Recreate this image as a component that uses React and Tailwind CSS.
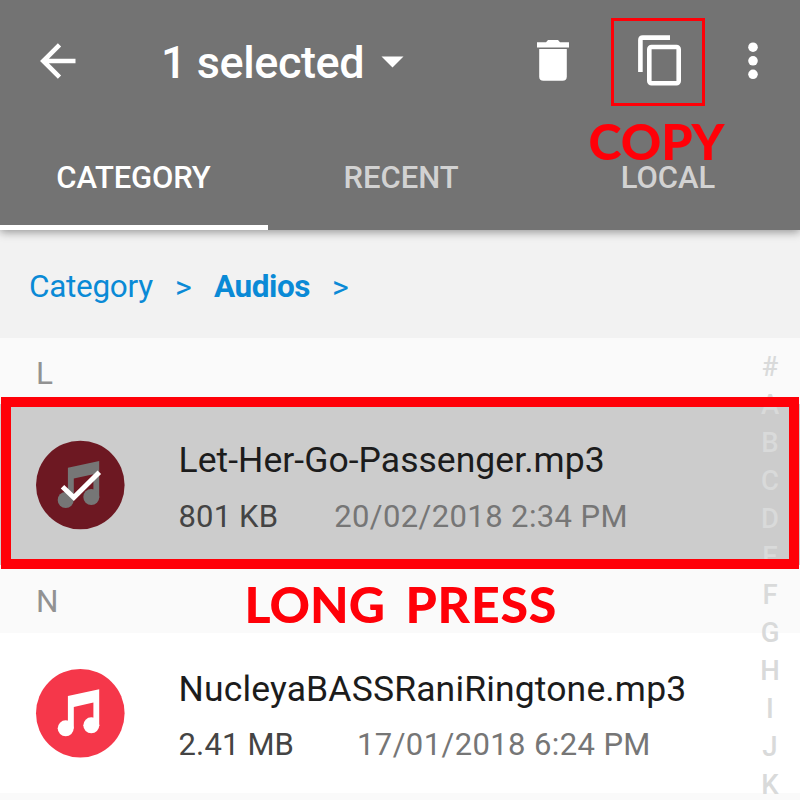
const INDEX = ['#', 'A', 'B', 'C', 'D', 'E', 'F', 'G', 'H', 'I', 'J', 'K'];

function BackIcon() {
  return (
    <svg width="36" height="36" viewBox="0 0 36 36" fill="none" stroke="#fff" strokeWidth="4.6">
      <path d="M35.5 18H3.5M19.5 1.8 3.3 18l16.2 16.2" />
    </svg>
  );
}

function TrashIcon() {
  return (
    <svg width="32" height="41" viewBox="0 0 32 41" fill="#fff">
      <path d="M0 2.2h9L11 0h10l2 2.2h9v5.4H0z" />
      <path d="M2.2 9h27.6v27.5q0 4.3-4.3 4.3h-19q-4.3 0-4.3-4.3z" />
    </svg>
  );
}

function CopyIcon() {
  return (
    <svg width="44" height="51" viewBox="0 0 44 51" fill="none" stroke="#fff" strokeWidth="4.6">
      <path d="M2.4 37V5q0-2.4 2.4-2.4H32" />
      <rect x="11.3" y="12" width="29.4" height="36.2" rx="2.2" />
    </svg>
  );
}

function MoreIcon() {
  return (
    <svg width="10" height="38" viewBox="0 0 10 38" fill="#fff">
      <circle cx="5" cy="5.2" r="4.8" />
      <circle cx="5" cy="18.8" r="4.8" />
      <circle cx="5" cy="32.3" r="4.8" />
    </svg>
  );
}

function AudioIcon({ selected }) {
  const note = selected ? '#767676' : '#fff';
  return (
    <svg width="90" height="90" viewBox={selected ? '-0.3 0 90 90' : '-0.3 0.7 90 90'}>
      <circle cx="45" cy="45" r="44.3" fill={selected ? '#6d1822' : '#f5374a'} />
      <g fill={note}>
        <path d="M32.6 27.8 63.9 21v37h-5.8V34.3L38.5 38.6V60h-5.9z" />
        <circle cx="30.4" cy="60" r="8" />
        <circle cx="56" cy="57" r="8" />
      </g>
      {selected && <path d="M27.2 46.8 38.5 57.6 64 32.2" fill="none" stroke="#fff" strokeWidth="5" />}
    </svg>
  );
}

function Section({ letter, className }) {
  return <div className={`flex items-center bg-[#fafafa] pl-[36px] text-[31.5px] text-[#929292] ${className}`}>{letter}</div>;
}

function FileRow({ name, size, date, gap, nameClass, selected, className }) {
  return (
    <div className={`flex pl-[35px] ${className}`}>
      <div className="w-[143.5px] shrink-0 pt-[36px]">
        <AudioIcon selected={selected} />
      </div>
      <div className="pt-[35px] whitespace-nowrap">
        <div className={`h-[42px] text-[35.5px] leading-[42px] text-[#1c1c1c] ${nameClass}`}>{name}</div>
        <div className={`flex h-[42px] text-[31px] leading-[42px] ${gap}`}>
          <span className="tracking-[0.15px] text-[#444]">{size}</span>
          <span className="tracking-[0.39px] text-[#767676]">{date}</span>
        </div>
      </div>
    </div>
  );
}

export default function App() {
  return (
    <div className="relative h-[800px] w-[800px] overflow-hidden bg-[#fafafa] font-['Roboto',sans-serif]">
      <header className="relative h-[230px] bg-[#737373] text-white shadow-[0_2px_9px_rgba(0,0,0,0.4)]">
        <div className="flex h-[121px] items-center pl-[40px]">
          <div className="w-[121px]"><BackIcon /></div>
          <div className="w-[220px] pt-[5px] text-[45px] font-medium tracking-[-0.45px] whitespace-nowrap">1 selected</div>
          <svg className="mt-[2px]" width="23" height="12" viewBox="0 0 23 12" fill="#fff"><path d="M0.5 0.5h22l-11 11z" /></svg>
          <div className="ml-[133px] w-[100.5px]"><TrashIcon /></div>
          <div className="w-[110.5px]"><CopyIcon /></div>
          <MoreIcon />
        </div>
        <nav className="grid h-[109px] grid-cols-[268px_266px_266px] text-[31px] font-medium">
          <div className="flex items-center justify-center border-b-[5px] border-white pt-[11px] pr-px tracking-[-0.15px]">CATEGORY</div>
          <div className="flex items-center justify-center pt-[6px] text-[#d2d2d2]">RECENT</div>
          <div className="flex items-center justify-center pt-[6px] pl-[2px] text-[#d2d2d2]">LOCAL</div>
        </nav>
      </header>

      <div className="flex h-[108px] items-center bg-[#f2f2f2] pt-[5px] pl-[29px] text-[31.5px] text-[#0a8ad6]">
        <span className="w-[146px] tracking-[-0.3px]">Category</span>
        <span className="w-[39px] text-[32px]">&gt;</span>
        <span className="w-[118px] font-bold tracking-[-0.45px]">Audios</span>
        <span className="text-[32px]">&gt;</span>
      </div>

      <Section letter="L" className="h-[66px] pt-[5px]" />
      <FileRow selected name="Let-Her-Go-Passenger.mp3" size="801 KB" date="20/02/2018 2:34 PM" gap="mt-[15px] gap-[56px]" nameClass="tracking-[0.04px]" className="h-[161px] bg-[#ccc]" />
      <Section letter="N" className="h-[68px] pt-[5px]" />
      <FileRow name="NucleyaBASSRaniRingtone.mp3" size="2.41 MB" date="17/01/2018 6:24 PM" gap="mt-[14px] gap-[63px]" nameClass="tracking-[0.15px]" className="h-[160px] bg-white" />

      <div className="absolute top-[348px] left-[750px] w-[40px] text-center text-[27.5px] font-medium text-[#d9dada]">
        {INDEX.map((c) => (
          <div key={c} className="h-[38px] leading-[38px]">{c}</div>
        ))}
      </div>

      <div className="absolute top-[397px] left-px h-[172px] w-[798px] border-[10px] border-[#ff0008]" />
      <div className="absolute top-[18px] left-[611px] h-[88px] w-[94px] border-[3px] border-[#ff0008]" />
      <div className="absolute top-[111px] left-[588.5px] font-['Lato',sans-serif] text-[50px] leading-[60px] font-black text-[#ff0008]">COPY</div>
      <div className="absolute top-[574px] left-[244.5px] flex gap-[20.5px] font-['Lato',sans-serif] text-[50px] leading-[60px] font-black text-[#ff0008]">
        <span>LONG</span>
        <span className="tracking-[0.8px]">PRESS</span>
      </div>
    </div>
  );
}
